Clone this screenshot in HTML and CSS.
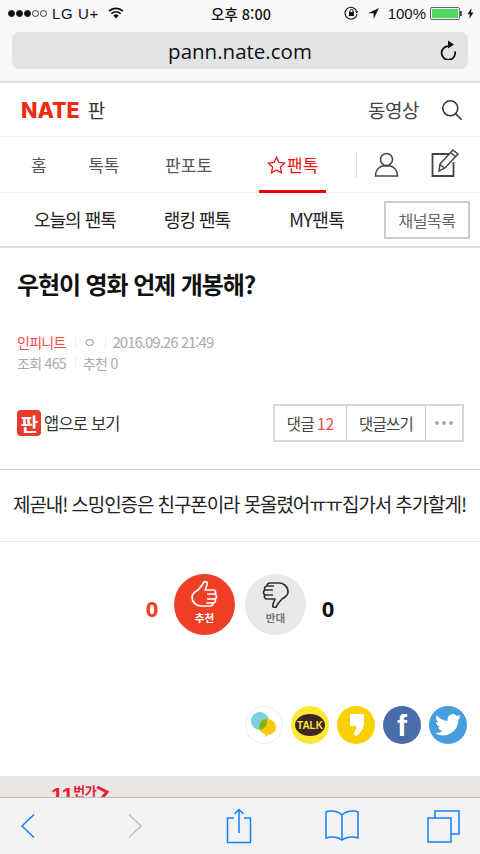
FILE: index.html
```html
<!DOCTYPE html>
<html lang="ko">
<head>
<meta charset="utf-8">
<title>pann.nate.com</title>
<link rel="stylesheet" href="styles.css">
</head>
<body>
<div class="phone">
  <header class="chrome">
    <div class="status">
      <div class="status-side">
        <span class="dots"><i class="dot on"></i><i class="dot on"></i><i class="dot on"></i><i class="dot"></i><i class="dot"></i></span>
        <span class="carrier">LG U+</span>
        <svg class="wifi" width="16" height="12" viewBox="0 0 16 12"><path d="M1 4.200a10 10 0 0 1 14 0M3.400 6.600a6.600 6.600 0 0 1 9.200 0" fill="none" stroke="#111" stroke-width="1.700"/><path d="M5.300 8.600a3.800 3.800 0 0 1 5.400 0L8 11.400z" fill="#111"/></svg>
      </div>
      <div class="clock">오후 8:00</div>
      <div class="status-side right">
        <svg width="15" height="14" viewBox="0 0 15 14"><path d="M12.600 5A6 6 0 1 0 13 8" fill="none" stroke="#111" stroke-width="1.100"/><path d="M11 5.200h3.400L12.700 7.600z" fill="#111"/><rect x="5" y="6" width="5" height="4" fill="#111"/><path d="M6 6V4.800a1.500 1.500 0 0 1 3 0V6" fill="none" stroke="#111"/></svg>
        <svg class="loc" width="13" height="13" viewBox="0 0 13 13"><path d="M12 1 1 6.200h5.600V12z" fill="#111"/></svg>
        <span class="batt-text">100%</span>
        <span class="battery"><span class="battery-fill"></span></span>
        <svg width="7" height="11" viewBox="0 0 7 11"><path d="M4.500 0 .5 6.200h2.400L2.200 11l4.300-6.500H4z" fill="#111"/></svg>
      </div>
    </div>
    <div class="url">
      <span class="url-text">pann.nate.com</span>
      <svg class="reload" width="18" height="20" viewBox="0 0 18 20"><path d="M15 9.500A6.800 6.800 0 1 1 9 4.200" transform="translate(0 2)" fill="none" stroke="#111" stroke-width="1.800"/><path d="M8 .6 14 4.600 8 8.600z" fill="#111"/></svg>
    </div>
  </header>

  <main class="page">
    <div class="gnb">
      <div class="brand"><span class="logo">NATE</span><span class="brand-sub">판</span></div>
      <div class="gnb-right">
        <span class="gnb-link">동영상</span>
        <svg width="22" height="22" viewBox="0 0 22 22"><circle cx="9.300" cy="9.300" r="7.500" fill="none" stroke="#333" stroke-width="1.600"/><path d="m14.700 14.700 6 6" stroke="#333" stroke-width="1.600"/></svg>
      </div>
    </div>

    <nav class="tabs">
      <a class="tab t1">홈</a>
      <a class="tab t2">톡톡</a>
      <a class="tab t3">판포토</a>
      <a class="tab t4 active">
        <svg width="19" height="18" viewBox="0 0 19 18"><path d="m9.500 1.300 2.400 5.200 5.700.7-4.200 3.900 1.100 5.600-5-2.800-5 2.800 1.100-5.600L1.400 7.200l5.700-.7z" fill="none" stroke="#f01010" stroke-width="1.300"/></svg>팬톡
      </a>
      <span class="tab-sep"></span>
      <svg class="tab-icon user" width="25" height="25" viewBox="0 0 25 25"><circle cx="12.500" cy="7.500" r="6" fill="none" stroke="#444" stroke-width="1.600"/><path d="M1.500 24c0-5.500 3.500-9 7-10h8c3.500 1 7 4.500 7 10z" fill="none" stroke="#444" stroke-width="1.600"/></svg>
      <svg class="tab-icon edit" width="30" height="30" viewBox="0 0 30 30"><path d="M19 6H2.500v22h21V14" fill="none" stroke="#444" stroke-width="1.800"/><path d="m10 16 13-14 5 4-13 14-6 3zM21 5l5 4M10.500 17l4 3" fill="none" stroke="#444" stroke-width="1.500"/></svg>
    </nav>

    <div class="subtabs">
      <a class="sub s1">오늘의 팬톡</a>
      <a class="sub s2">랭킹 팬톡</a>
      <a class="sub s3">MY팬톡</a>
      <a class="channel">채널목록</a>
    </div>

    <article class="post-head">
      <h1 class="title">우현이 영화 언제 개봉해?</h1>
      <div class="meta">
        <div class="meta-row"><span class="author">인피니트</span><i class="bar"></i><span class="nick">ㅇ</span><i class="bar"></i><span>2016.09.26 21:49</span></div>
        <div class="meta-row views"><span>조회 465</span><i class="bar"></i><span>추천 0</span></div>
      </div>
      <div class="actions">
        <div class="app-link">
          <span class="app-badge">판</span>
          <span>앱으로 보기</span>
        </div>
        <div class="btn-group">
          <a class="btn b1">댓글 <em>12</em></a>
          <a class="btn b2">댓글쓰기</a>
          <a class="btn b3"><i></i><i></i><i></i></a>
        </div>
      </div>
    </article>

    <div class="body-text">제곧내! 스밍인증은 친구폰이라 못올렸어ㅠㅠ집가서 추가할게!</div>

    <div class="votes">
      <span class="count up">0</span>
      <div class="vote vote-up">
        <svg width="27" height="27" viewBox="0 0 27 27"><path d="M1 16C1 12 4 11 7 9c3-3 5-6 6-8 2-1 4 0 3 3l-2 5h8c3 0 3 3 2 4 2 1 2 4 0 5 1 2 0 4-2 4 0 2-1 3-3 3h-9C6 25 1 22 1 16z" fill="none" stroke="#fff" stroke-width="1.700" stroke-linejoin="round"/><path d="M16 13h8M16 18h8M15 22h7" stroke="#fff" stroke-width="1.500"/></svg>
        <span>추천</span>
      </div>
      <div class="vote vote-down">
        <svg width="27" height="27" viewBox="0 0 27 27"><g transform="rotate(180 13.500 13.500)"><path d="M1 16C1 12 4 11 7 9c3-3 5-6 6-8 2-1 4 0 3 3l-2 5h8c3 0 3 3 2 4 2 1 2 4 0 5 1 2 0 4-2 4 0 2-1 3-3 3h-9C6 25 1 22 1 16z" fill="none" stroke="#333" stroke-width="1.700" stroke-linejoin="round"/><path d="M16 13h8M16 18h8M15 22h7" stroke="#333" stroke-width="1.500"/></g></svg>
        <span>반대</span>
      </div>
      <span class="count">0</span>
    </div>

    <div class="share">
      <span class="sns sns-line"><svg width="30" height="30" viewBox="0 0 30 30"><circle cx="11" cy="11" r="9" fill="#7fcfdc"/><path d="M18 9c5 0 9 3.500 9 8 0 4-3 7-7 7.500L16 27l.5-2.800C12.500 23 10 20.500 10 17c0-4.500 3.500-8 8-8z" fill="#fbcb0a"/><path d="M10.300 15A8.500 8.500 0 0 1 18 9.100 9 9 0 0 1 11 20c-.7-1.500-1-3.300-.7-5z" fill="#82b11e"/></svg></span>
      <span class="sns sns-talk"><span class="talk">TALK</span></span>
      <span class="sns sns-story"><svg width="15" height="22" viewBox="0 0 15 22"><path d="M1 0h14v9c0 5-3 10-8 13l-2.500-2.500C6.500 17.500 7.500 15 7.500 12H1z" fill="#fff"/></svg></span>
      <span class="sns sns-fb">f</span>
      <span class="sns sns-tw"><svg width="26" height="22" viewBox="0 0 24 20"><path d="M24 2.400a10 10 0 0 1-2.800.8A5 5 0 0 0 23.300.5a10 10 0 0 1-3.100 1.200 4.900 4.900 0 0 0-8.400 4.500A14 14 0 0 1 1.700.9a4.900 4.900 0 0 0 1.500 6.600 4.900 4.900 0 0 1-2.200-.6c0 2.400 1.700 4.400 3.900 4.900a5 5 0 0 1-2.200.1 4.900 4.900 0 0 0 4.600 3.400A9.900 9.900 0 0 1 0 17.300 14 14 0 0 0 21.500 4.900 10 10 0 0 0 24 2.400z" fill="#fff"/></svg></span>
    </div>

    <div class="ad"><span class="ad-text"><b>11</b>번가<svg width="13" height="12" viewBox="0 0 13 12"><path d="M1 1 11 6 6 12" fill="none" stroke="#e8203a" stroke-width="3"/></svg></span></div>
  </main>

  <footer class="toolbar">
    <svg class="tb-back" width="16" height="26" viewBox="0 0 16 26"><path d="M14 1.500 2 13l12 11.500" fill="none" stroke="#147efb" stroke-width="1.500"/></svg>
    <svg class="tb-next" width="16" height="26" viewBox="0 0 16 26"><path d="M2 1.500 14 13 2 24.500" fill="none" stroke="#bdbdbd" stroke-width="1.500"/></svg>
    <svg class="tb-share" width="26" height="36" viewBox="0 0 26 36"><path d="M8 10H1.500v24.500h23V10H18M13 25V1.500M8.500 6 13 1.500 17.500 6" fill="none" stroke="#147efb" stroke-width="1.500"/></svg>
    <svg class="tb-book" width="34" height="32" viewBox="0 0 34 32"><path d="M17 5c-3-3-7-4-11-4-2 0-4 .5-5 1v26c4-1.500 11-2 16 2 5-4 12-3.500 16-2V2c-1-.5-3-1-5-1-4 0-8 1-11 4zm0 0v25" fill="none" stroke="#147efb" stroke-width="1.500"/></svg>
    <svg class="tb-tabs" width="33" height="33" viewBox="0 0 33 33"><path d="M1 8h23v24H1zM8 8V1h24v23h-8" fill="none" stroke="#147efb" stroke-width="1.500"/></svg>
  </footer>
</div>
</body>
</html>
```

FILE: styles.css
```css
* { box-sizing: border-box; }
html, body { margin: 0; padding: 0; }
body {
  width: 480px;
  height: 854px;
  overflow: hidden;
  background: #fff;
  font-family: "Noto Sans CJK KR", "Noto Sans", sans-serif;
  color: #222;
}
a { color: inherit; text-decoration: none; }
em { font-style: normal; }
.phone { width: 480px; height: 854px; display: flex; flex-direction: column; overflow: hidden; }

/* browser chrome */
.chrome { height: 83px; flex: none; background: #f8f8f8; border-bottom: 2px solid #dcdcdc; padding: 0 12px; }
.status { height: 32px; margin: 0 -12px; padding: 0 6px 6px 8px; display: grid; grid-template-columns: 1fr auto 1fr; align-items: center; font-family: "Liberation Sans", sans-serif; font-size: 15px; color: #111; }
.status-side { display: flex; align-items: center; gap: 5px; }
.status-side.right { justify-content: flex-end; gap: 0; }
.dots { display: flex; gap: 1px; }
.dot { width: 7px; height: 7px; border-radius: 50%; border: 1px solid #333; }
.dot.on { background: #111; border-color: #111; }
.carrier { font-size: 15px; letter-spacing: .6px; margin-right: 4px; }
.clock { font-family: "Noto Sans CJK KR", sans-serif; font-size: 14.500px; font-weight: 500; }
.loc { margin: 0 8px; }
.batt-text { font-size: 15px; margin-right: 4px; }
.battery { width: 30px; height: 13px; border: 1px solid #666; border-radius: 2px; padding: 1px; margin-right: 7px; position: relative; }
.battery::after { content: ""; position: absolute; right: -3px; top: 3px; width: 2px; height: 5px; background: #555; }
.battery-fill { display: block; height: 100%; background: #4cd964; }
.url { height: 37px; background: #e3e4e6; border-radius: 7px; position: relative; display: flex; align-items: center; justify-content: center; }
.url-text { font-family: "Open Sans", sans-serif; font-size: 20.500px; color: #111; }
.reload { position: absolute; right: 10px; top: 8px; }

.page { flex: 1; display: flex; flex-direction: column; min-height: 0; overflow: hidden; }
.gnb { height: 54px; flex: none; display: flex; align-items: center; justify-content: space-between; padding: 0 17px 0 21px; border-bottom: 1px solid #f0f0f0; }
.brand { display: flex; align-items: center; gap: 8px; }
.logo { font-family: "Inter", sans-serif; font-weight: 800; font-size: 21.500px; color: #f02a10; }
.brand-sub { font-size: 19px; color: #333; }
.gnb-right { display: flex; align-items: center; gap: 22px; }
.gnb-link { font-size: 19px; letter-spacing: -.5px; color: #444; }

.tabs { height: 56px; flex: none; display: flex; align-items: center; border-bottom: 1px solid #f0f0f0; position: relative; font-size: 17px; color: #555; }
.tab { display: flex; align-items: center; height: 100%; }
.t1 { margin-left: 31px; }
.t2 { margin-left: 41.500px; }
.t3 { margin-left: 45.700px; }
.t4 { margin-left: 55px; gap: 1px; }
.tab.active { color: #f01010; position: relative; }
.tab.active::after { content: ""; position: absolute; left: -8px; right: -8px; bottom: -1px; height: 3px; background: #f00000; }
.tab-sep { width: 1px; height: 26px; background: #ddd; margin-left: 38px; }
.user { margin-left: 17px; }
.edit { margin-left: 31px; margin-top: -4px; }

.subtabs { height: 55px; flex: none; display: flex; align-items: center; border-bottom: 2px solid #ddd; font-size: 18px; letter-spacing: -1px; color: #222; }
.sub { padding-bottom: 2px; }
.s1 { margin-left: 34px; }
.s2 { margin-left: 48px; }
.s3 { margin-left: 59px; letter-spacing: -.5px; }
.channel { margin-left: auto; margin-right: 10px; width: 86px; height: 38px; border: 2px solid #ccc; display: flex; align-items: center; justify-content: center; font-size: 16px; color: #666; letter-spacing: -.5px; }

.post-head { flex: none; height: 222px; border-bottom: 1px solid #ccc; padding: 19px 16px 0 17px; display: flex; flex-direction: column; }
.title { margin: 0; font-size: 24px; line-height: 34px; font-weight: 700; letter-spacing: -1.100px; color: #111; }
.meta { margin-top: 30px; font-size: 15px; color: #aaa; letter-spacing: -1px; line-height: 22px; }
.meta-row { display: flex; align-items: center; height: 21px; }
.views { font-size: 14px; letter-spacing: -.7px; }
.bar { width: 1px; height: 14px; background: #eee; margin: 0 7px 0 9px; }
.author { color: #f0484a; font-size: 14px; letter-spacing: -.7px; }
.actions { margin-top: 31px; display: flex; align-items: center; justify-content: space-between; }
.app-link { display: flex; align-items: center; gap: 3px; font-size: 16.500px; letter-spacing: -.8px; color: #333; }
.app-badge { width: 24px; height: 26px; border-radius: 4px; background: #ea3a2e; color: #fff; font-size: 19px; font-weight: 700; display: flex; align-items: center; justify-content: center; }
.btn-group { display: flex; height: 38px; border: 2px solid #d8d8d8; font-size: 15.500px; letter-spacing: -.7px; color: #444; }
.btn { display: flex; align-items: center; justify-content: center; border-left: 1px solid #d0d0d0; gap: 3px; }
.btn em { color: #f05050; letter-spacing: 0; }
.b1 { width: 71px; border-left: 0; }
.b2 { width: 79px; }
.b3 { width: 37px; gap: 3px; }
.b3 i { width: 4px; height: 4px; border-radius: 50%; background: #aaa; }

.body-text { flex: none; height: 72px; border-bottom: 1px solid #e6e6e6; display: flex; align-items: center; justify-content: center; white-space: nowrap; font-size: 19px; letter-spacing: -1.100px; color: #222; padding: 0 1px 5px 0; }

.votes { flex: none; height: 134px; display: flex; align-items: flex-start; justify-content: center; padding-top: 32px; }
.count { font-family: "Open Sans", sans-serif; font-weight: 700; font-size: 22px; line-height: 68px; color: #111; width: 34px; text-align: center; }
.count.up { color: #f0401f; }
.vote { width: 61px; height: 61px; border-radius: 50%; display: flex; flex-direction: column; align-items: center; font-size: 10.500px; font-weight: 700; padding-top: 7px; margin: 0 5px; line-height: 13px; }
.vote svg { margin-bottom: 3px; }
.vote-up { background: #ef3f25; color: #fff; }
.vote-down { background: #e9e9e9; color: #777; }

.share { flex: none; height: 100px; display: flex; align-items: flex-start; justify-content: flex-end; gap: 8px; padding: 30px 13px 0 0; }
.sns { width: 38px; height: 38px; border-radius: 50%; display: flex; align-items: center; justify-content: center; flex: none; }
.sns-line { background: #fff; border: 1px solid #eee; }
.sns-talk { background: #ffe735; }
.talk { background: #3e2723; color: #ffe735; font-family: "Liberation Sans", sans-serif; font-size: 10px; font-weight: 700; border-radius: 50%; width: 30px; height: 22px; display: flex; align-items: center; justify-content: center; }
.sns-story { background: #fbd000; }
.sns-fb { background: #4a6ca8; color: #fff; font-family: "Liberation Sans", sans-serif; font-weight: 700; font-size: 30px; align-items: flex-end; line-height: 36px; }
.sns-tw { background: #469ede; }

.ad { flex: 1; background: #ebe6e2; padding: 7px 0 0 51px; min-height: 0; overflow: hidden; }
.ad-text { display: flex; align-items: flex-start; color: #e8203a; font-size: 13px; letter-spacing: -.5px; font-weight: 700; line-height: 16px; }
.ad-text b { font-size: 22px; font-family: "Liberation Sans", sans-serif; line-height: 26px; }
.ad-text svg { margin-top: 3px; }

.toolbar { height: 57px; flex: none; border-top: 1px solid #bfbdbb; background: #f4f3f3; display: flex; align-items: center; padding-left: 20px; }
.tb-next { margin-left: 91px; }
.tb-share { margin-left: 83px; }
.tb-book { margin-left: 73px; }
.tb-tabs { margin-left: 68px; }
```
